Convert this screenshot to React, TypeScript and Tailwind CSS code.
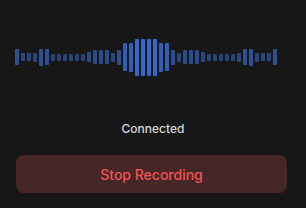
const bars = [
  16, 8, 8, 9, 17, 16, 7, 7, 7, 7, 7, 7, 10, 14, 14, 14, 9, 15, 28, 29,
  37, 37, 37, 37, 29, 28, 15, 9, 14, 14, 14, 10, 7, 7, 7, 7, 7, 9, 16, 17,
  9, 8, 8, 16,
];

function Waveform() {
  return (
    <div className="flex h-[40px] items-center gap-[2px] pl-[15px]">
      {bars.map((h, i) => (
        <div
          key={i}
          className="w-[4px] rounded-[1px] bg-[#3668c8]"
          style={{ height: h, opacity: Math.min(1, 0.45 + h / 65) }}
        />
      ))}
    </div>
  );
}

export default function App() {
  return (
    <div
      className="flex h-[208px] w-[306px] flex-col bg-[#171717]"
      style={{ fontFamily: "Inter, 'Noto Sans', sans-serif" }}
    >
      <div className="pt-[37px]">
        <Waveform />
      </div>
      <p className="mt-[43px] text-center text-[12px] font-medium text-[#d8d8d8]">
        Connected
      </p>
      <div className="mt-[17px] pl-[16px] pr-[19px]">
        <button
          type="button"
          className="flex h-[38px] w-full items-center justify-center rounded-[8px] bg-[#452727] text-[14px] font-medium text-[#f45252]"
        >
          Stop Recording
        </button>
      </div>
    </div>
  );
}
